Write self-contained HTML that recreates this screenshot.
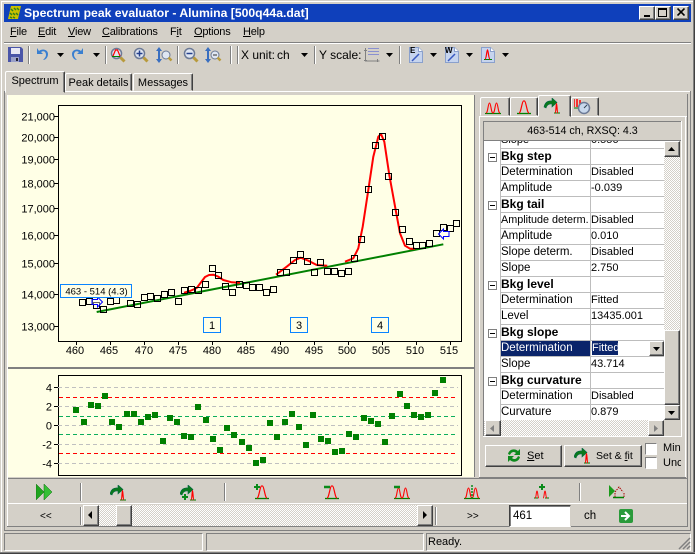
<!DOCTYPE html>
<html><head><meta charset="utf-8"><style>
html,body{margin:0;padding:0;background:#d4d0c8}
#w{position:relative;width:695px;height:554px;overflow:hidden;background:#d4d0c8;font:12px "Liberation Sans",sans-serif;color:#000}
#w div,#w span.a,#w svg.a{position:absolute}
.b{box-sizing:border-box;background:#d4d0c8;border:1px solid;border-color:#fff #404040 #404040 #fff;box-shadow:inset -1px -1px #808080}
.sep{width:1px;background:#808080;border-right:1px solid #fff}
.t{white-space:nowrap;line-height:14px}
.mn{font-size:11px;letter-spacing:-.2px}
.tab{box-sizing:border-box;background:#d4d0c8;border:1px solid;border-color:#fff #404040 transparent #fff;border-radius:2px 2px 0 0;box-shadow:inset -1px 0 #808080;text-align:center;font-size:11px}
.ch{background:repeating-conic-gradient(#d4d0c8 0 25%,#fff 0 50%) 0 0/2px 2px}
.r{left:501px;width:163px;height:16px;box-sizing:border-box;border-bottom:1px solid #bdbdbd;line-height:16px;white-space:nowrap;background:#fff}
.r b{position:absolute;left:0;top:0;font-size:12px;line-height:15px}
.r i{font-style:normal;position:absolute;left:0;top:0;line-height:15px;font-size:11.5px}
.r u{text-decoration:none;position:absolute;left:90px;top:0;line-height:15px;font-size:11px}
.m{width:9px;height:9px;left:488px;box-sizing:border-box;border:1px solid #808080;background:#fff}
.m:after{content:"";position:absolute;left:1px;top:3px;width:5px;height:1px;background:#000}
.ck{box-sizing:border-box;width:12px;height:12px;background:#fff;border:1px solid;border-color:#808080 #fff #fff #808080}
</style></head><body><div id="w">
<svg width="0" height="0" style="position:absolute"><defs>
<symbol id="dd" viewBox="0 0 7 4"><path d="M0 0h7L3.500 4z" fill="#000"/></symbol>
<symbol id="pk" viewBox="0 0 16 16"><path d="M1 14.500h14" stroke="#008000" stroke-width="1.300"/><path d="M3 14C5 14 6 2 7.500 2h1C10 2 11 14 13 14" fill="none" stroke="#f00" stroke-width="1.200"/></symbol>
<symbol id="dp" viewBox="0 0 16 16"><path d="M0 14.500h16" stroke="#008000" stroke-width="1.200"/><path d="M1 14C3 14 3 4 4.500 4S6 14 8 14 10 4 11.500 4 13 14 15 14" fill="none" stroke="#f00" stroke-width="1.100"/></symbol>
<symbol id="fit" viewBox="0 0 16 16"><path d="M0 9C1 4 4 2.500 8 3V0l5 4.500-5 4.500V6C5 5.500 3 6.500 2 10z" fill="#0a7a1a" stroke="#064" stroke-width=".6"/><path d="M10 15h6" stroke="#008000"/><path d="M11 15c1 0 1-8 1.500-9 .6 1 .5 9 1.500 9" fill="none" stroke="#f00" stroke-width="1.200"/></symbol>
<symbol id="mag" viewBox="0 0 16 16"><circle cx="6.500" cy="6.500" r="5" fill="#dfe6f2" stroke="#6c7a96" stroke-width="1.500"/><path d="M10.500 10.500l4 4" stroke="#b89a3c" stroke-width="3"/></symbol>
<symbol id="doc" viewBox="0 0 14 16"><path d="M.5.500h9l4 4v11H.5z" fill="#c6d4ee" stroke="#8aa0cc"/><path d="M9.500.500v4h4" fill="#fff" stroke="#8aa0cc"/></symbol>
</defs></svg>

<!-- window frame -->
<div style="left:1px;top:1px;width:692px;height:1px;background:#fff"></div>
<div style="left:1px;top:1px;width:1px;height:551px;background:#fff"></div>
<div style="left:693px;top:0;width:1px;height:553px;background:#808080"></div>
<div style="left:694px;top:0;width:1px;height:554px;background:#404040"></div>
<div style="left:0;top:552px;width:695px;height:1px;background:#808080"></div>
<div style="left:0;top:553px;width:695px;height:1px;background:#404040"></div>

<!-- title -->
<div style="left:4px;top:4px;width:687px;height:18px;background:#0f40bb"></div>
<svg class="a" style="left:7px;top:5px" width="15" height="15"><path d="M1 14L4 1h10l-3 13z" fill="#c8c000"/><path d="M4 4l2 2M7 3l2 2M10 3l2 2M3 8l2 2M6 8l2 2M9 8l2 2M3 12l2 1M6 12l2 1" stroke="#2f7d1a" stroke-width="1.500"/></svg>
<div class="t" style="left:24px;top:6px;color:#fff;font-weight:bold;font-size:12.2px">Spectrum peak evaluator - Alumina [500q44a.dat]</div>
<div class="b" style="left:639px;top:6px;width:16px;height:14px"></div><div style="left:644px;top:15px;width:6px;height:2px;background:#000"></div>
<div class="b" style="left:655px;top:6px;width:16px;height:14px"></div><div style="left:658px;top:8px;width:9px;height:9px;box-sizing:border-box;border:1px solid #000;border-top-width:2px"></div>
<div class="b" style="left:673px;top:6px;width:16px;height:14px"></div><svg class="a" style="left:677px;top:8px" width="8" height="8"><path d="M.5.500l7 7M7.500.500l-7 7" stroke="#000" stroke-width="1.600"/></svg>

<!-- menu -->
<div class="t mn" style="left:10px;top:25px"><u>F</u>ile</div>
<div class="t mn" style="left:38px;top:25px"><u>E</u>dit</div>
<div class="t mn" style="left:68px;top:25px"><u>V</u>iew</div>
<div class="t mn" style="left:102px;top:25px"><u>C</u>alibrations</div>
<div class="t mn" style="left:170px;top:25px">F<u>i</u>t</div>
<div class="t mn" style="left:194px;top:25px"><u>O</u>ptions</div>
<div class="t mn" style="left:243px;top:25px"><u>H</u>elp</div>
<div style="left:4px;top:42px;width:687px;height:1px;background:#808080"></div>
<div style="left:4px;top:43px;width:687px;height:1px;background:#fff"></div>

<!-- toolbar -->
<svg class="a" style="left:8px;top:47px" width="15" height="15"><path d="M0 0h13l2 2v13H0z" fill="#4a55a8"/><rect x="3" y="1" width="9" height="6" fill="#e8e8f4"/><rect x="3" y="10" width="8" height="5" fill="#9aa0c8"/><rect x="8" y="11" width="2" height="3" fill="#223"/></svg>
<div class="sep" style="left:28px;top:46px;height:18px"></div>
<svg class="a" style="left:35px;top:47px" width="14" height="14"><path d="M2 1v6h6L6 5c3-2 5 0 5 3 0 2-2 4-3 5 3 0 5-3 5-6 0-4-5-6-9-3z" fill="#3a7fd0"/></svg>
<svg class="a" style="left:57px;top:53px" width="7" height="4"><use href="#dd"/></svg>
<svg class="a" style="left:71px;top:47px" width="14" height="14"><path d="M12 1v6H6l2-2C5 3 3 5 3 8c0 2 2 4 3 5-3 0-5-3-5-6 0-4 5-6 9-3z" fill="#3a7fd0"/></svg>
<svg class="a" style="left:93px;top:53px" width="7" height="4"><use href="#dd"/></svg>
<div class="sep" style="left:105px;top:46px;height:18px"></div>
<svg class="a" style="left:110px;top:47px" width="16" height="16"><use href="#mag"/><path d="M3 9L5.500 3h2L10 9" fill="none" stroke="#f00" stroke-width="1.200"/><path d="M2 9.500h8" stroke="#008000"/></svg>
<svg class="a" style="left:133px;top:47px" width="16" height="16"><use href="#mag"/><path d="M3.500 6.500h6M6.500 3.500v6" stroke="#24408c" stroke-width="1.500"/></svg>
<svg class="a" style="left:156px;top:46px" width="17" height="18"><path d="M3 1l3 4H4v8h2l-3 4-3-4h2V5H0z" fill="#3a6fc0"/><circle cx="10" cy="9" r="4" fill="#dfe6f2" stroke="#6c7a96"/><path d="M12.500 11.500l3 3" stroke="#b89a3c" stroke-width="2.500"/></svg>
<div class="sep" style="left:177px;top:46px;height:18px"></div>
<svg class="a" style="left:183px;top:47px" width="16" height="16"><use href="#mag"/><path d="M3.500 6.500h6" stroke="#24408c" stroke-width="1.500"/></svg>
<svg class="a" style="left:205px;top:46px" width="17" height="18"><path d="M3 1l3 4H4v8h2l-3 4-3-4h2V5H0z" fill="#3a6fc0"/><circle cx="10" cy="9" r="4" fill="#dfe6f2" stroke="#6c7a96"/><path d="M8 9h4" stroke="#333"/><path d="M12.500 11.500l3 3" stroke="#b89a3c" stroke-width="2.500"/></svg>
<div class="sep" style="left:230px;top:46px;height:18px"></div>
<div class="sep" style="left:237px;top:46px;height:18px"></div>
<div class="t" style="left:241px;top:48px">X unit:</div>
<div class="t" style="left:277px;top:48px">ch</div>
<svg class="a" style="left:301px;top:53px" width="7" height="4"><use href="#dd"/></svg>
<div class="sep" style="left:314px;top:46px;height:18px"></div>
<div class="t" style="left:319px;top:48px">Y scale:</div>
<svg class="a" style="left:364px;top:47px" width="16" height="16"><path d="M1.500 1v13h14M0 3.500h3M0 13.500h3M13.500 12v3" fill="none" stroke="#808080"/><path d="M4 1.500h11M4 4.500h11M4 7.500h11" stroke="#8a90d0"/></svg>
<svg class="a" style="left:386px;top:53px" width="7" height="4"><use href="#dd"/></svg>
<div class="sep" style="left:399px;top:46px;height:18px"></div>
<svg class="a" style="left:409px;top:47px" width="14" height="16"><use href="#doc"/><path d="M3 14l7-7" stroke="#3a5ac0" stroke-width="1.500"/></svg>
<div class="t" style="left:410px;top:46px;font-size:8px;font-weight:bold;line-height:9px">E</div>
<svg class="a" style="left:430px;top:53px" width="7" height="4"><use href="#dd"/></svg>
<svg class="a" style="left:445px;top:47px" width="14" height="16"><use href="#doc"/><path d="M3 14l7-7" stroke="#3a5ac0" stroke-width="1.500"/></svg>
<div class="t" style="left:445px;top:46px;font-size:8px;font-weight:bold;line-height:9px">W</div>
<svg class="a" style="left:466px;top:53px" width="7" height="4"><use href="#dd"/></svg>
<svg class="a" style="left:481px;top:47px" width="14" height="16"><use href="#doc"/><path d="M3 12.500h8" stroke="#008000"/><path d="M4 12c1.500 0 1.500-8 2.500-9 1 1 1 9 2.500 9" fill="none" stroke="#f00" stroke-width="1.200"/></svg>
<svg class="a" style="left:502px;top:53px" width="7" height="4"><use href="#dd"/></svg>

<!-- main tab page frame -->
<div style="left:4px;top:91px;width:686px;height:1px;background:#fff"></div>
<div style="left:4px;top:91px;width:1px;height:440px;background:#808080"></div>
<div style="left:690px;top:91px;width:1px;height:440px;background:#808080"></div>
<div style="left:4px;top:530px;width:687px;height:1px;background:#808080"></div>
<div style="left:7px;top:95px;width:1px;height:432px;background:#fff"></div>
<div style="left:687px;top:94px;width:1px;height:433px;background:#808080"></div>
<div style="left:7px;top:526px;width:681px;height:1px;background:#808080"></div>
<div class="tab t" style="left:5px;top:71px;width:60px;height:22px;line-height:19px">Spectrum</div>
<div class="tab t" style="left:65px;top:73px;width:67px;height:18px;line-height:18px">Peak details</div>
<div class="tab t" style="left:133px;top:73px;width:60px;height:18px;line-height:18px">Messages</div>

<!-- chart area -->
<div style="left:8px;top:95px;width:466px;height:272px;background:#ffffe6"></div>
<div style="left:8px;top:367px;width:466px;height:2px;background:#808080"></div>
<div style="left:8px;top:369px;width:466px;height:108px;background:#ffffe6"></div>
<div style="left:474px;top:95px;width:1px;height:382px;background:#808080"></div>

<svg class="a" style="left:0;top:0" width="695" height="554" font-family="Liberation Sans,sans-serif" font-size="11" fill="#000">
<rect x="58.500" y="105.500" width="403" height="236" fill="none" stroke="#000"/>
<path d="M54 116.500h4M54 137.500h4M54 159.500h4M54 183.500h4M54 208.500h4M54 235.500h4M54 263.500h4M54 294.500h4M54 326.500h4" stroke="#000"/>
<path d="M76.500 342v3M110.500 342v3M144.500 342v3M178.500 342v3M212.500 342v3M246.500 342v3M280.500 342v3M314.500 342v3M348.500 342v3M382.500 342v3M416.500 342v3M450.500 342v3" stroke="#000"/>
<g text-anchor="end">
<text x="55" y="120.500">21,000</text><text x="55" y="141.500">20,000</text><text x="55" y="163.500">19,000</text><text x="55" y="187.500">18,000</text><text x="55" y="212.500">17,000</text><text x="55" y="239.500">16,000</text><text x="55" y="267.500">15,000</text><text x="55" y="298.500">14,000</text><text x="55" y="330.500">13,000</text>
</g>
<g text-anchor="middle">
<text x="75" y="354">460</text><text x="109" y="354">465</text><text x="144" y="354">470</text><text x="178" y="354">475</text><text x="212" y="354">480</text><text x="246" y="354">485</text><text x="280" y="354">490</text><text x="314" y="354">495</text><text x="347" y="354">500</text><text x="381" y="354">505</text><text x="415" y="354">510</text><text x="449" y="354">515</text>
</g>
<path d="M96.700 312L443.300 244.300" stroke="#008000" stroke-width="2" fill="none"/>
<path d="M184 292.700L190 291 196.700 288 205 277 209 275 213.300 274.700 218 276.500 223.300 280 231.700 282.300 240 282.700M276 274.700L286.700 266.700 295 260 300.700 257.700 308.300 260.700 316.700 265 327.300 265.700M345 261.700L353.300 258.300 358.300 248.300 362.700 226.700 368.300 190 373.300 156.700 378.300 136.700 381 134 384.300 141.700 389.300 175 396 211.700 400 233.300 405 245.700 410 248.700 415 248.700" stroke="#f00" stroke-width="2" fill="none" stroke-linejoin="round"/>
<path fill="none" stroke="#000" d="M79.500 299.500h6v6h-6zM86.500 298.500h6v6h-6zM93.500 302.500h6v6h-6zM100.500 306.500h6v6h-6zM107.500 298.500h6v6h-6zM113.500 297.500h6v6h-6zM127.500 300.500h6v6h-6zM134.500 301.500h6v6h-6zM141.500 294.500h6v6h-6zM147.500 293.500h6v6h-6zM154.500 295.500h6v6h-6zM161.500 291.500h6v6h-6zM168.500 289.500h6v6h-6zM175.500 298.500h6v6h-6zM181.500 287.500h6v6h-6zM188.500 286.500h6v6h-6zM195.500 287.500h6v6h-6zM202.500 281.500h6v6h-6zM209.500 265.500h6v6h-6zM215.500 272.500h6v6h-6zM222.500 283.500h6v6h-6zM229.500 289.500h6v6h-6zM236.500 281.500h6v6h-6zM243.500 282.500h6v6h-6zM249.500 284.500h6v6h-6zM256.500 284.500h6v6h-6zM263.500 289.500h6v6h-6zM270.500 286.500h6v6h-6zM277.500 269.500h6v6h-6zM283.500 269.500h6v6h-6zM290.500 257.500h6v6h-6zM297.500 251.500h6v6h-6zM304.500 258.500h6v6h-6zM311.500 269.500h6v6h-6zM317.500 259.500h6v6h-6zM324.500 268.500h6v6h-6zM331.500 268.500h6v6h-6zM338.500 270.500h6v6h-6zM345.500 268.500h6v6h-6zM351.500 255.500h6v6h-6zM358.500 236.500h6v6h-6zM365.500 186.500h6v6h-6zM372.500 142.500h6v6h-6zM379.500 133.500h6v6h-6zM385.500 173.500h6v6h-6zM392.500 209.500h6v6h-6zM399.500 226.500h6v6h-6zM406.500 238.500h6v6h-6zM413.500 242.500h6v6h-6zM419.500 242.500h6v6h-6zM426.500 240.500h6v6h-6zM433.500 230.500h6v6h-6zM440.500 224.500h6v6h-6zM447.500 225.500h6v6h-6zM453.500 220.500h6v6h-6z"/>
<path d="M92 299.500h5.500V297l5 5-5 5v-2.500H92z" fill="#fff" fill-opacity=".4" stroke="#00f"/>
<path d="M449 231.500h-5.500V229l-5 5 5 5v-2.500H449z" fill="#fff" fill-opacity=".4" stroke="#00f"/>
<g fill="#ffffe6" stroke="#0a84ff"><rect x="60.500" y="284.500" width="71" height="13"/><rect x="203.500" y="317.500" width="17" height="15"/><rect x="290.500" y="317.500" width="17" height="15"/><rect x="371.500" y="317.500" width="17" height="15"/></g>
<text x="96.500" y="294.500" text-anchor="middle" font-size="9.500">463 - 514 (4.3)</text>
<g text-anchor="middle"><text x="212" y="329">1</text><text x="299" y="329">3</text><text x="380" y="329">4</text></g>

<rect x="58.500" y="375.500" width="403" height="100" fill="none" stroke="#000"/>
<g stroke-dasharray="4 3" fill="none">
<path d="M58 387.500h400M58 406.500h400M58 425.500h400M58 444.500h400M58 463.500h400" stroke="#c0c0c0"/>
<path d="M59 397.500h396M59 453.500h396" stroke="#f00"/>
<path d="M59 416.500h396M59 434.500h396" stroke="#0cae5c"/>
</g>
<path d="M54 387.500h4M54 406.500h4M54 425.500h4M54 444.500h4M54 463.500h4" stroke="#000"/>
<g text-anchor="end"><text x="52" y="391.500">4</text><text x="52" y="410.500">2</text><text x="52" y="429.500">0</text><text x="52" y="448.500">-2</text><text x="52" y="467.500">-4</text></g>
<path fill="#008000" d="M73 407h6v6h-6zM81 419h6v6h-6zM88 402h6v6h-6zM95 403h6v6h-6zM102 393h6v6h-6zM109 419h6v6h-6zM116 424h6v6h-6zM124 411h6v6h-6zM131 411h6v6h-6zM138 419h6v6h-6zM145 414h6v6h-6zM152 412h6v6h-6zM160 438h6v6h-6zM167 415h6v6h-6zM174 419h6v6h-6zM181 433h6v6h-6zM188 434h6v6h-6zM195 404h6v6h-6zM203 417h6v6h-6zM210 436h6v6h-6zM217 447h6v6h-6zM224 425h6v6h-6zM231 432h6v6h-6zM239 439h6v6h-6zM246 445h6v6h-6zM253 460h6v6h-6zM260 457h6v6h-6zM267 420h6v6h-6zM274 434h6v6h-6zM282 419h6v6h-6zM289 411h6v6h-6zM296 424h6v6h-6zM303 442h6v6h-6zM310 412h6v6h-6zM318 436h6v6h-6zM325 438h6v6h-6zM332 449h6v6h-6zM339 448h6v6h-6zM346 431h6v6h-6zM353 434h6v6h-6zM361 415h6v6h-6zM368 418h6v6h-6zM375 421h6v6h-6zM382 439h6v6h-6zM389 413h6v6h-6zM397 391h6v6h-6zM404 403h6v6h-6zM411 412h6v6h-6zM418 414h6v6h-6zM425 412h6v6h-6zM432 390h6v6h-6zM440 377h6v6h-6z"/>
</svg>

<!-- right panel -->
<div style="left:479px;top:116px;width:208px;height:1px;background:#fff"></div>
<div style="left:479px;top:116px;width:1px;height:362px;background:#fff"></div>
<div style="left:685px;top:116px;width:1px;height:362px;background:#fff"></div>
<div style="left:479px;top:477px;width:207px;height:1px;background:#808080"></div>
<div class="tab" style="left:480px;top:97px;width:30px;height:19px"></div>
<svg class="a" style="left:484px;top:99px" width="18" height="16"><use href="#dp"/></svg>
<div class="tab" style="left:510px;top:97px;width:28px;height:19px"></div>
<svg class="a" style="left:516px;top:99px" width="16" height="16"><use href="#pk"/></svg>
<div class="tab" style="left:538px;top:95px;width:33px;height:22px"></div>
<svg class="a" style="left:543px;top:98px" width="18" height="16"><use href="#fit"/></svg>
<div class="tab" style="left:571px;top:97px;width:28px;height:19px"></div>
<svg class="a" style="left:574px;top:98px" width="18" height="18"><path d="M0 9V1M3 9V1M6 9V2" stroke="#f00" stroke-width="1.500"/><path d="M0 10h7" stroke="#008000"/><circle cx="10" cy="10" r="5.500" fill="#c8d8ec" stroke="#6c7a96" stroke-width="1.500"/><path d="M10 10l3-3" stroke="#345" stroke-width="1"/></svg>

<!-- header of grid -->
<div style="left:483px;top:121px;width:199px;height:1px;background:#808080"></div>
<div style="left:483px;top:121px;width:1px;height:315px;background:#808080"></div>
<div style="left:681px;top:121px;width:1px;height:316px;background:#fff"></div>
<div style="left:483px;top:436px;width:199px;height:1px;background:#fff"></div>
<div class="t" style="left:484px;top:124px;width:197px;text-align:center;font-size:10.7px">463-514 ch, RXSQ: 4.3</div>
<div style="left:484px;top:140px;width:197px;height:1px;background:#808080"></div>

<!-- grid -->
<div style="left:484px;top:141px;width:180px;height:279px;background:#fff;overflow:hidden"></div>
<div style="left:501px;top:141px;width:163px;height:7px;overflow:hidden;background:#fff;border-bottom:1px solid #bdbdbd;box-sizing:content-box;font-size:11px"><span class="a t" style="left:0;top:-8px;line-height:15px">Slope</span><span class="a t" style="left:90px;top:-8px;line-height:15px">0.556</span></div>
<div class="r" style="top:149px"><b>Bkg step</b></div>
<div class="r" style="top:165px"><i>Determination</i><u>Disabled</u></div>
<div class="r" style="top:181px"><i>Amplitude</i><u>-0.039</u></div>
<div class="r" style="top:197px"><b>Bkg tail</b></div>
<div class="r" style="top:213px"><i style="font-size:10.8px">Amplitude determ.</i><u>Disabled</u></div>
<div class="r" style="top:229px"><i>Amplitude</i><u>0.010</u></div>
<div class="r" style="top:245px"><i>Slope determ.</i><u>Disabled</u></div>
<div class="r" style="top:261px"><i>Slope</i><u>2.750</u></div>
<div class="r" style="top:277px"><b>Bkg level</b></div>
<div class="r" style="top:293px"><i>Determination</i><u>Fitted</u></div>
<div class="r" style="top:309px"><i>Level</i><u>13435.001</u></div>
<div class="r" style="top:325px"><b>Bkg slope</b></div>
<div class="r" style="top:341px"><i>Determination</i><u>Fitted</u></div>
<div class="r" style="top:357px"><i>Slope</i><u>43.714</u></div>
<div class="r" style="top:373px"><b>Bkg curvature</b></div>
<div class="r" style="top:389px"><i>Determination</i><u>Disabled</u></div>
<div class="r" style="top:405px"><i>Curvature</i><u>0.879</u></div>
<div style="left:500px;top:141px;width:1px;height:279px;background:#bdbdbd"></div>
<div style="left:590px;top:141px;width:1px;height:279px;background:#bdbdbd"></div>
<div style="left:501px;top:341px;width:89px;height:15px;background:#0a246a;color:#fff;line-height:15px;font-size:11.5px">Determination</div>
<div style="left:592px;top:341px;width:26px;height:14px;background:#0a246a;color:#fff;line-height:14px;overflow:hidden;font-size:11px">Fitted</div>
<div class="b" style="left:649px;top:341px;width:15px;height:15px"></div>
<svg class="a" style="left:653px;top:347px" width="7" height="4"><use href="#dd"/></svg>
<div class="m" style="top:153px"></div>
<div class="m" style="top:201px"></div>
<div class="m" style="top:281px"></div>
<div class="m" style="top:329px"></div>
<div class="m" style="top:377px"></div>

<!-- grid scrollbars -->
<div class="ch" style="left:664px;top:141px;width:16px;height:279px"></div>
<div class="b" style="left:664px;top:141px;width:16px;height:16px"></div>
<svg class="a" style="left:668px;top:147px" width="7" height="4"><path d="M0 4h7L3.500 0z"/></svg>
<div class="b" style="left:664px;top:330px;width:16px;height:75px"></div>
<div class="b" style="left:664px;top:405px;width:16px;height:15px"></div>
<svg class="a" style="left:668px;top:411px" width="7" height="4"><use href="#dd"/></svg>
<div class="ch" style="left:484px;top:420px;width:180px;height:16px"></div>
<div class="b" style="left:485px;top:420px;width:16px;height:16px"></div>
<svg class="a" style="left:490px;top:425px" width="4" height="7"><path d="M4 0v7L0 3.500z" fill="#808080"/></svg>
<div class="b" style="left:648px;top:420px;width:16px;height:16px"></div>
<svg class="a" style="left:654px;top:425px" width="4" height="7"><path d="M0 0v7l4-3.500z" fill="#808080"/></svg>

<!-- set buttons -->
<div class="b" style="left:485px;top:445px;width:77px;height:22px"></div>
<svg class="a" style="left:506px;top:447px" width="16" height="17"><path d="M2 7C3 2 9 1 12 4l2-2v6H8l2-2C8 4 5 5 4 8z" fill="#0e8a1e"/><path d="M14 10c-1 5-7 6-10 3l-2 2V9h6l-2 2c2 2 5 1 6-2z" fill="#0e8a1e"/></svg>
<div class="t" style="left:527px;top:449px;font-size:11px"><u>S</u>et</div>
<div class="b" style="left:564px;top:445px;width:78px;height:22px"></div>
<svg class="a" style="left:574px;top:448px" width="16" height="16"><use href="#fit"/></svg>
<div class="t" style="left:596px;top:449px;font-size:10.5px">Set &amp; <u>f</u>it</div>
<div class="ck" style="left:645px;top:443px"></div>
<div class="ck" style="left:645px;top:457px"></div>
<div class="t" style="left:663px;top:441px;width:18px;overflow:hidden;font-size:11px">Min.</div>
<div class="t" style="left:663px;top:456px;width:18px;overflow:hidden;font-size:11px">Unc</div>

<!-- bottom toolbar -->
<div style="left:8px;top:478px;width:679px;height:1px;background:#808080"></div>
<div style="left:8px;top:503px;width:679px;height:1px;background:#fff"></div>
<svg class="a" style="left:36px;top:484px" width="17" height="16"><path d="M0 0l8 8-8 8z" fill="#1fa51f" stroke="#0a6a0a" stroke-width=".5"/><path d="M8 0l8 8-8 8z" fill="#35c035" stroke="#0a6a0a" stroke-width=".5"/></svg>
<div class="sep" style="left:80px;top:483px;height:18px"></div>
<svg class="a" style="left:110px;top:485px" width="16" height="16"><use href="#fit"/></svg>
<svg class="a" style="left:180px;top:485px" width="16" height="16"><use href="#fit"/><path d="M5 9v6M2 12h6" stroke="#0a8a1a" stroke-width="2"/></svg>
<div class="sep" style="left:224px;top:483px;height:18px"></div>
<svg class="a" style="left:254px;top:484px" width="16" height="16"><use href="#pk"/><path d="M3 0v6M0 3h6" stroke="#0a8a1a" stroke-width="2"/></svg>
<svg class="a" style="left:324px;top:484px" width="16" height="16"><use href="#pk"/><path d="M0 3h6" stroke="#0a8a1a" stroke-width="2.500"/></svg>
<svg class="a" style="left:394px;top:484px" width="16" height="16"><use href="#dp"/><path d="M0 3h6" stroke="#0a8a1a" stroke-width="2.500"/></svg>
<svg class="a" style="left:464px;top:484px" width="16" height="16"><use href="#dp"/><path d="M8 1v14" stroke="#0a8a1a" stroke-width="1.500" stroke-dasharray="2 1"/></svg>
<svg class="a" style="left:534px;top:484px" width="16" height="16"><path d="M0 14h4M11 14h4" stroke="#008000"/><path d="M1 14c1.500 0 1-7 2-7s.5 7 2 7M9 14c1.500 0 1-7 2-7s.5 7 2 7" fill="none" stroke="#f00"/><path d="M8 0v6M5 3h6" stroke="#0a8a1a" stroke-width="2"/></svg>
<div class="sep" style="left:579px;top:483px;height:18px"></div>
<svg class="a" style="left:608px;top:484px" width="17" height="16"><path d="M1 1l6 6-6 6z" fill="#1a9a1a"/><path d="M7 8l4-5 4 5M7 9v4M16 9v4" fill="none" stroke="#a00" stroke-dasharray="1.500 1"/><path d="M5 13.500h11" stroke="#008000" stroke-width="1.500"/></svg>

<!-- range row -->
<div class="t" style="left:40px;top:510px;font-size:10px">&lt;&lt;</div>
<div class="sep" style="left:80px;top:507px;height:18px"></div>
<div class="ch" style="left:83px;top:505px;width:349px;height:21px"></div>
<div class="b" style="left:83px;top:505px;width:16px;height:21px"></div>
<svg class="a" style="left:88px;top:511px" width="4" height="8"><path d="M4 0v8L0 4z"/></svg>
<div class="b" style="left:116px;top:505px;width:16px;height:21px"></div>
<div class="b" style="left:417px;top:505px;width:16px;height:21px"></div>
<svg class="a" style="left:423px;top:511px" width="4" height="8"><path d="M0 0v8l4-4z"/></svg>
<div class="sep" style="left:435px;top:507px;height:18px"></div>
<div class="t" style="left:467px;top:510px;font-size:10px">&gt;&gt;</div>
<div class="t" style="left:509px;top:505px;width:62px;height:22px;box-sizing:border-box;background:#fff;border:1px solid;border-color:#404040 #d4d0c8 #fff #404040;box-shadow:inset 1px 1px #808080;line-height:20px;padding-left:3px;font-size:11.5px">461</div>
<div class="t" style="left:584px;top:509px;font-size:11.5px">ch</div>
<svg class="a" style="left:619px;top:509px" width="14" height="14"><rect width="14" height="14" rx="2" fill="#2a9a3a"/><path d="M2 7h7M6 3l4 4-4 4" fill="none" stroke="#fff" stroke-width="2"/></svg>

<!-- status bar -->
<div style="left:4px;top:533px;width:199px;height:18px;box-sizing:border-box;border:1px solid;border-color:#808080 #fff #fff #808080"></div>
<div style="left:206px;top:533px;width:218px;height:18px;box-sizing:border-box;border:1px solid;border-color:#808080 #fff #fff #808080"></div>
<div style="left:426px;top:533px;width:265px;height:18px;box-sizing:border-box;border:1px solid;border-color:#808080 #fff #fff #808080"></div>
<div class="t" style="left:428px;top:535px;font-size:11px">Ready.</div>
<svg class="a" style="left:678px;top:537px" width="13" height="13"><path d="M12 1L1 12M12 5l-7 7M12 9l-3 3" stroke="#808080" stroke-width="1.500"/></svg>
</div></body></html>
